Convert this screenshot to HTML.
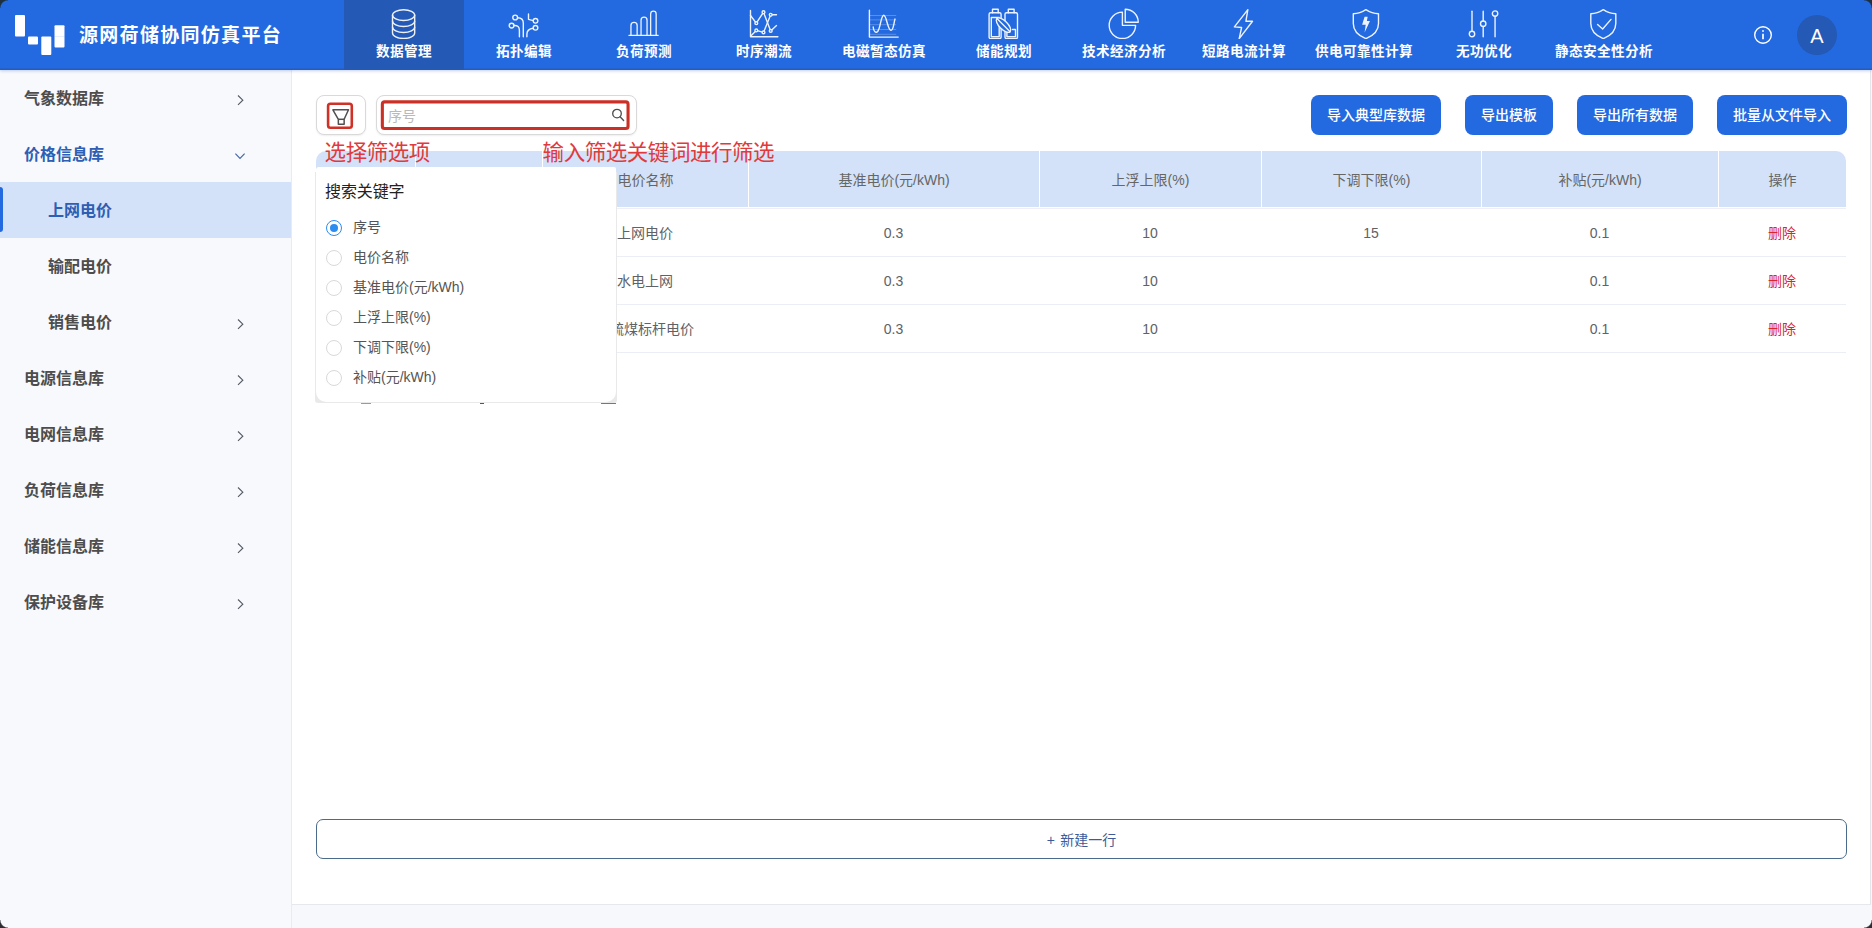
<!DOCTYPE html>
<html lang="zh-CN">
<head>
<meta charset="utf-8">
<title>源网荷储协同仿真平台</title>
<style>
*{box-sizing:border-box;margin:0;padding:0}
html,body{width:1872px;height:928px;overflow:hidden}
body{position:relative;background:#f7f8fc;font-family:"Liberation Sans","Noto Sans CJK SC",sans-serif;color:#606266;font-size:14px}
.abs{position:absolute}
/* header */
#hdr{position:absolute;left:0;top:0;width:1872px;height:70px;background:#2369e0;box-shadow:inset 0 -1px 0 #2b5cb4,inset 0 -2px 0 rgba(43,92,180,.45),0 1px 3px rgba(60,100,200,.30);z-index:5}
#logo rect{fill:#fff}
#title{position:absolute;left:79px;top:21px;height:30px;line-height:30px;font-size:19px;font-weight:700;color:#fff;letter-spacing:1.3px;white-space:nowrap}
.tab{position:absolute;top:0;width:120px;height:70px;text-align:center;color:#fff}
.tab.on{background:#2459b5}
.tab svg{position:absolute;left:44px;top:7px;width:32px;height:32px;fill:none;stroke:#fff;stroke-width:1.4;stroke-linecap:round;stroke-linejoin:round;opacity:.92}
.tab span{position:absolute;left:0;width:120px;top:42px;height:20px;line-height:20px;font-size:13.6px;font-weight:700;letter-spacing:.4px;white-space:nowrap}
#info{position:absolute;left:1753px;top:25px;width:20px;height:20px}
#avatar{position:absolute;left:1797px;top:15px;width:40px;height:40px;border-radius:50%;background:#2459b5;color:#fff;font-size:20px;line-height:42px;text-align:center}
/* sidebar */
#side{position:absolute;left:0;top:70px;width:292px;height:858px;background:#f8f9fd;border-right:1px solid #e9ebf1}
.mi{position:absolute;left:0;width:291px;height:56px;line-height:58px;font-size:16px;font-weight:700;color:#4d4d4d;white-space:nowrap}
.mi b{position:absolute;left:24px;top:0;font-weight:700}
.mi.sub b{left:48px}
.mi.act{color:#2d5fb5}
.mi.sel{background:#d3e2f8;color:#2d5fb5}
.mi.sel i{position:absolute;left:0;top:5px;width:3px;height:45px;background:#2369e0;border-radius:0 3px 3px 0}
.mi svg{position:absolute;left:232px;top:22px;width:16px;height:16px;fill:none;stroke:#555a64;stroke-width:1.15}
.mi.act svg{stroke:#4466a6}
/* main */
#main{position:absolute;left:292px;top:70px;width:1579px;height:835px;background:#fff;border-bottom:1px solid #e6e8ee;border-right:1px solid #e3e5ea}
.ibox{position:absolute;top:95px;height:39.5px;border:1px solid #d9d9d9;border-radius:8px;background:#fff;box-shadow:0 1px 2px rgba(0,0,0,.07)}
.red{position:absolute;border:2.5px solid #cf3127;border-radius:3.5px}
.rt{position:absolute;color:#df3a3c;font-size:21.5px;line-height:24px;white-space:nowrap;letter-spacing:-.45px}
.btn{position:absolute;top:95px;height:40px;line-height:40px;border-radius:8px;background:#2369e0;color:#fff;font-size:14px;font-weight:500;text-align:center;letter-spacing:0;white-space:nowrap}
/* table */
#th{position:absolute;left:316px;top:151px;width:1530px;height:56px;background:#d3e2f8;border-radius:10px 10px 0 0}
.hc{position:absolute;top:0;height:56px;line-height:58px;text-align:center;color:#666;font-size:14px;letter-spacing:0;border-left:1px solid #fff;white-space:nowrap}
.row{position:absolute;left:316px;width:1530px;height:48px;border-bottom:1px solid #ebeef5}
.c{position:absolute;top:0;height:48px;line-height:49px;text-align:center;color:#606266;font-size:14px;letter-spacing:0;white-space:nowrap}
.del{color:#d9262c}
/* popup */
#pop{position:absolute;left:316px;top:167px;width:300px;height:235px;background:#fff;border-radius:3px 2px 10px 10px}
#popsh{position:absolute;left:315px;top:172px;width:302px;height:231px;background:#e9e9e9;border-radius:0 0 3px 3px}
#pop h4{position:absolute;left:9px;top:12.8px;font-size:16px;line-height:24px;font-weight:400;color:#222;letter-spacing:-.1px}
.ro{position:absolute;left:10px;height:20px;line-height:20px;font-size:14px;color:#555;white-space:nowrap;letter-spacing:0}
.ro i{position:absolute;left:0;top:2px;width:16px;height:16px;border:1px solid #d9d9d9;border-radius:50%;background:#fff}
.ro.on i{border-color:#2d8cf0}
.ro.on i:after{content:"";position:absolute;left:3px;top:3px;width:8px;height:8px;border-radius:50%;background:#2d8cf0}
.ro span{position:absolute;left:27px;top:-1px}
#add{position:absolute;left:316px;top:819px;width:1531px;height:40px;border:1px solid #4a6b8a;border-radius:7px;line-height:40px;text-align:center;color:#3f5a98;font-size:14px;letter-spacing:0;word-spacing:1.5px}
.cn{position:absolute;width:8px;height:8px;z-index:9}
</style>
</head>
<body>
<div id="hdr">
<svg id="logo" class="abs" style="left:0;top:0" width="80" height="69"><rect x="15" y="15" width="10" height="21.5" rx="1"/><rect x="28" y="36.5" width="10" height="8" rx="1"/><rect x="41.3" y="36.5" width="10" height="18.5" rx="1"/><rect x="54.5" y="25.3" width="10" height="22.3" rx="1"/><rect x="54.5" y="36.2" width="10" height=".7" style="fill:#2369e0;opacity:.16"/></svg>
<div id="title">源网荷储协同仿真平台</div>
<!--TABS_START-->
<div class="tab on" style="left:344px"><svg viewBox="0 -0.5 32 32"><ellipse cx="15.6" cy="7.6" rx="11.1" ry="5.4"/><path d="M4.5 7.6v18c0 3 5 5.4 11.1 5.4s11.1-2.4 11.1-5.4V7.6"/><path d="M4.5 13.6c0 3 5 5.4 11.1 5.4s11.1-2.4 11.1-5.4"/><path d="M4.5 19.6c0 3 5 5.4 11.1 5.4s11.1-2.4 11.1-5.4"/></svg><span>数据管理</span></div>
<div class="tab" style="left:464px"><svg viewBox="0 -0.5 32 32"><circle cx="7.2" cy="10" r="2.4"/><path d="M9.6 10.3Q15.3 10.5 15.3 15.5V29.2"/><circle cx="3.6" cy="18.1" r="2.4"/><path d="M6 18Q11.4 17.6 11.4 22.8V29.2"/><circle cx="27.5" cy="13.3" r="2.3"/><path d="M20.5 6.4V11.8L25.3 13.2"/><circle cx="27.5" cy="20.3" r="2.3"/><path d="M25.2 20.8Q18.9 21.5 18.9 26.8V29.2"/></svg><span>拓扑编辑</span></div>
<div class="tab" style="left:584px"><svg viewBox="0 -0.5 32 32"><g stroke-width="1.3"><path d="M.9 27.8H30.2"/><path d="M2.95 27.8V18a3.1 3.1 0 0 1 6.2 0V27.8"/><path d="M13.05 27.8V12.65a3 3 0 0 1 6 0V27.8"/><path d="M22.65 27.8V6.4a2.75 2.75 0 0 1 5.5 0V27.8"/></g></svg><span>负荷预测</span></div>
<div class="tab" style="left:704px"><svg viewBox="0 -0.5 32 32"><path d="M2.5 3V29.2H29.9"/><path d="M2.5 8L8.3 15.7L15.5 4.7L22.7 23.4L28.5 18.1"/><path d="M3 28.2L8.3 22.9L15.5 24.9L22.7 7.3H28.5"/><g fill="#2369e0"><circle cx="8.3" cy="15.7" r="1.4"/><circle cx="15.5" cy="4.7" r="1.4"/><circle cx="22.7" cy="23.4" r="1.4"/><circle cx="8.3" cy="22.9" r="1.4"/><circle cx="15.5" cy="24.9" r="1.4"/><circle cx="22.7" cy="7.3" r="1.4"/></g></svg><span>时序潮流</span></div>
<div class="tab" style="left:824px"><svg viewBox="0 -0.5 32 32"><path d="M1.4 2.8V29.6H30.2"/><path d="M1.4 8H27.8M1.4 12.4H27.8M1.4 17.2H27.8M1.4 22H27.8M1.4 26.8H27.8" stroke-width=".5" opacity=".55"/><path d="M5.2 19.5C5.5 24 8 26.5 10 23.5C12.6 19.5 13 7.8 15.8 7.8C18.6 7.8 19.6 22.9 23 22.9C25.6 22.9 26 14 27 11.6"/></svg><span>电磁暂态仿真</span></div>
<div class="tab" style="left:944px"><svg viewBox="0 -0.5 32 32"><path d="M4.5 5.2V1.8h5.7v3.4"/><rect x="1.1" y="5.2" width="12" height="25.9" rx="1.6"/><rect x="3.3" y="10" width="7.9" height="19.2"/><path d="M20.3 5.2V1.8h5.8v3.4"/><rect x="17" y="5.2" width="12.5" height="25.9" rx="1.6"/><path d="M24.5 22h3v7.2h-8.6v-5"/><g transform="rotate(45 15.5 17.6)"><ellipse cx="15.5" cy="17.6" rx="9.3" ry="4.2" fill="#2369e0"/><path d="M6.2 17.6H24.8"/></g></svg><span>储能规划</span></div>
<div class="tab" style="left:1064px"><svg viewBox="0 -0.5 32 32"><path d="M14.4 4.65A13.2 13.2 0 1 0 27.6 17.85H14.4Z"/><path d="M17.25 14.8V1.8A13 13 0 0 1 30.25 14.8Z"/></svg><span>技术经济分析</span></div>
<div class="tab" style="left:1184px"><svg viewBox="0 -0.5 32 32"><path d="M19.85 2.1L6.4 19.4L13.6 20L11.2 31.1L24.5 13.8L17.9 13.8Z"/></svg><span>短路电流计算</span></div>
<div class="tab" style="left:1304px"><svg viewBox="0 -0.5 32 32"><path d="M17.9 2.2Q12 6.2 5.3 6.2V16C5.3 23.5 10 28 17.9 31.1C25.8 28 30.5 23.5 30.5 16V6.2Q23.8 6.2 17.9 2.2Z"/><path d="M16.6 9.2H19.65L18.9 13.6H21.96L16.6 24.9L17.7 17.2H14.1Z" fill="#fff" stroke="none"/></svg><span>供电可靠性计算</span></div>
<div class="tab" style="left:1424px"><svg viewBox="0 -0.5 32 32"><path d="M4 3.7V23.7"/><circle cx="4" cy="26.5" r="2.7"/><path d="M15.2 3.7V13.4M15.2 19V29.2"/><circle cx="15.2" cy="16.2" r="2.7"/><path d="M27.06 9V29.2"/><circle cx="27.06" cy="6.1" r="2.7"/></svg><span>无功优化</span></div>
<div class="tab" style="left:1544px"><svg viewBox="0 -0.5 32 32"><path d="M15.3 2.2Q9.5 6.2 2.8 6.2V16C2.8 23.5 7.5 28 15.3 31.1C23.1 28 27.8 23.5 27.8 16V6.2Q21.1 6.2 15.3 2.2Z"/><path d="M9.56 16.9L14.65 21.5L23 11.9"/></svg><span>静态安全性分析</span></div>
<!--TABS_END-->
<svg id="info" viewBox="0 0 20 20" fill="none" stroke="#fff" stroke-width="1.4"><circle cx="10" cy="10" r="8.3"/><path d="M10 8.8v5.4" stroke-width="1.7"/><circle cx="10" cy="6" r=".9" fill="#fff" stroke="none"/></svg>
<div id="avatar">A</div>
</div>
<div id="side">
<!--MENU_START-->
<div class="mi" style="top:0px"><b>气象数据库</b><svg viewBox="0 0 16 16"><path d="M6 3.5L10.8 8.2L6 12.9"/></svg></div>
<div class="mi act" style="top:56px"><b>价格信息库</b><svg viewBox="0 0 16 16"><path d="M3.4 5.6L8 10.4L12.6 5.6"/></svg></div>
<div class="mi sub sel" style="top:112px"><i></i><b>上网电价</b></div>
<div class="mi sub" style="top:168px"><b>输配电价</b></div>
<div class="mi sub" style="top:224px"><b>销售电价</b><svg viewBox="0 0 16 16"><path d="M6 3.5L10.8 8.2L6 12.9"/></svg></div>
<div class="mi" style="top:280px"><b>电源信息库</b><svg viewBox="0 0 16 16"><path d="M6 3.5L10.8 8.2L6 12.9"/></svg></div>
<div class="mi" style="top:336px"><b>电网信息库</b><svg viewBox="0 0 16 16"><path d="M6 3.5L10.8 8.2L6 12.9"/></svg></div>
<div class="mi" style="top:392px"><b>负荷信息库</b><svg viewBox="0 0 16 16"><path d="M6 3.5L10.8 8.2L6 12.9"/></svg></div>
<div class="mi" style="top:448px"><b>储能信息库</b><svg viewBox="0 0 16 16"><path d="M6 3.5L10.8 8.2L6 12.9"/></svg></div>
<div class="mi" style="top:504px"><b>保护设备库</b><svg viewBox="0 0 16 16"><path d="M6 3.5L10.8 8.2L6 12.9"/></svg></div>
<!--MENU_END-->
</div>
<div id="main"></div>
<!--CONTENT_START-->
<div class="ibox" style="left:316px;width:50px"></div>
<svg class="abs" style="left:320px;top:96px" width="40" height="40" viewBox="320 96 40 40"><rect x="328.1" y="103.8" width="23.7" height="24" rx="2.3" fill="none" stroke="#cf3127" stroke-width="2.6"/></svg>
<svg class="abs" style="left:330px;top:106px" width="20" height="20" viewBox="0 0 20 20" fill="none" stroke="#505050" stroke-width="1.5" stroke-linejoin="round"><path d="M2.9 3.8H18.5L14.15 13.3V18.2H8.35V13.3Z"/><path d="M8.35 13.3H14.15"/></svg>
<div class="ibox" style="left:376px;width:261px"></div>
<svg class="abs" style="left:376px;top:96px" width="260" height="40" viewBox="376 96 260 40"><rect x="382.35" y="101.85" width="245.7" height="26.7" rx="2.3" fill="none" stroke="#cb3026" stroke-width="3.1"/></svg>
<div class="abs" style="left:388px;top:105px;line-height:22px;font-size:14px;color:#b9b9b9;letter-spacing:0">序号</div>
<svg class="abs" style="left:610px;top:107px" width="16" height="16" viewBox="0 0 16 16" fill="none" stroke="#505050" stroke-width="1.35" stroke-linecap="round"><circle cx="7" cy="6.6" r="4.3"/><path d="M10.1 9.8L13.6 13.5"/></svg>
<div class="btn" style="left:1311px;width:130px">导入典型库数据</div>
<div class="btn" style="left:1465px;width:88px">导出模板</div>
<div class="btn" style="left:1577px;width:116px">导出所有数据</div>
<div class="btn" style="left:1717px;width:130px">批量从文件导入</div>
<div id="th"><div class="hc" style="left:0px;width:99px;border-left:0"></div><div class="hc" style="left:99px;width:127px"></div><div class="hc" style="left:226px;width:206px">电价名称</div><div class="hc" style="left:432px;width:291px">基准电价(元/kWh)</div><div class="hc" style="left:723px;width:222px">上浮上限(%)</div><div class="hc" style="left:945px;width:220px">下调下限(%)</div><div class="hc" style="left:1165px;width:237px">补贴(元/kWh)</div><div class="hc" style="left:1402px;width:128px">操作</div></div>
<div class="abs" style="left:316px;top:208px;width:1530px;height:1px;background:#eef0f5"></div>
<div class="row" style="top:209px"><div class="c" style="left:226px;width:206px">上网电价</div><div class="c" style="left:432px;width:291px">0.3</div><div class="c" style="left:723px;width:222px">10</div><div class="c" style="left:945px;width:220px">15</div><div class="c" style="left:1165px;width:237px">0.1</div><div class="c del" style="left:1402px;width:128px">删除</div></div>
<div class="row" style="top:257px"><div class="c" style="left:226px;width:206px">水电上网</div><div class="c" style="left:432px;width:291px">0.3</div><div class="c" style="left:723px;width:222px">10</div><div class="c" style="left:1165px;width:237px">0.1</div><div class="c del" style="left:1402px;width:128px">删除</div></div>
<div class="row" style="top:305px"><div class="c" style="left:226px;width:206px">脱硫煤标杆电价</div><div class="c" style="left:432px;width:291px">0.3</div><div class="c" style="left:723px;width:222px">10</div><div class="c" style="left:1165px;width:237px">0.1</div><div class="c del" style="left:1402px;width:128px">删除</div></div>
<div class="rt" style="left:324.6px;top:141px">选择筛选项</div>
<div class="rt" style="left:542.6px;top:141px">输入筛选关键词进行筛选</div>
<div id="popsh"></div><div class="abs" style="left:361px;top:402.5px;width:10px;height:1.5px;background:#9a9a9a"></div><div class="abs" style="left:480px;top:402.5px;width:4px;height:1.5px;background:#555"></div><div class="abs" style="left:601px;top:402.5px;width:15px;height:1.5px;background:#777"></div>
<div id="pop"><h4>搜索关键字</h4><div class="ro on" style="top:51px"><i></i><span>序号</span></div><div class="ro" style="top:81px"><i></i><span>电价名称</span></div><div class="ro" style="top:111px"><i></i><span>基准电价(元/kWh)</span></div><div class="ro" style="top:141px"><i></i><span>上浮上限(%)</span></div><div class="ro" style="top:171px"><i></i><span>下调下限(%)</span></div><div class="ro" style="top:201px"><i></i><span>补贴(元/kWh)</span></div></div>
<div id="add">+ 新建一行</div>
<!--CONTENT_END-->
<div class="cn" style="left:0;top:0;background:radial-gradient(circle at 100% 100%,rgba(0,0,0,0) 7px,#1d3040 8.2px)"></div>
<div class="cn" style="right:0;top:0;background:radial-gradient(circle at 0 100%,rgba(0,0,0,0) 7px,#1d3040 8.2px)"></div>
<div class="cn" style="left:0;bottom:0;background:radial-gradient(circle at 100% 0,rgba(0,0,0,0) 7px,#2c2e33 8.2px)"></div>
<div class="cn" style="right:0;bottom:0;background:radial-gradient(circle at 0 0,rgba(0,0,0,0) 7px,#2c2e33 8.2px)"></div>
</body>
</html>
